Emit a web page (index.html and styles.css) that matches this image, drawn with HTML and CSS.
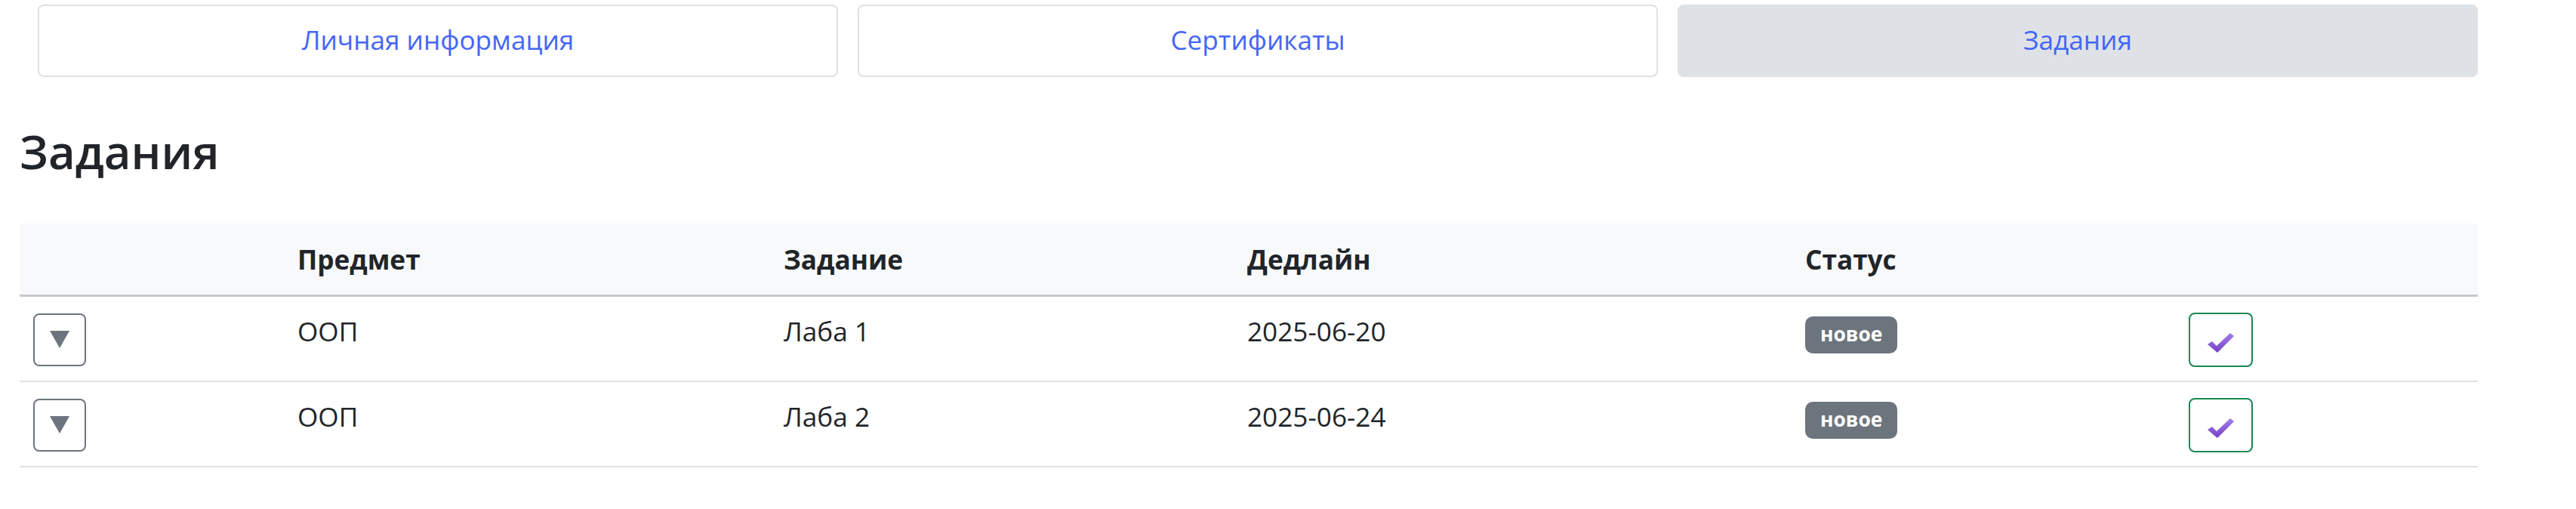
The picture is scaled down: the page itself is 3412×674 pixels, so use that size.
FILE: index.html
```html
<!DOCTYPE html>
<html lang="ru">
<head>
<meta charset="utf-8">
<title>Задания</title>
<link rel="stylesheet" href="styles.css">
</head>
<body>
<div class="page">
  <nav class="tabs">
    <a class="tab" href="#">Личная информация</a>
    <a class="tab" href="#">Сертификаты</a>
    <a class="tab active" href="#">Задания</a>
  </nav>

  <h3 class="title">Задания</h3>

  <table class="tasks">
    <colgroup>
      <col class="c0"><col class="c1"><col class="c2"><col class="c3"><col class="c4"><col class="c5">
    </colgroup>
    <thead>
      <tr>
        <th></th>
        <th>Предмет</th>
        <th>Задание</th>
        <th>Дедлайн</th>
        <th>Статус</th>
        <th></th>
      </tr>
    </thead>
    <tbody>
      <tr>
        <td><button class="toggle" type="button"><svg width="26" height="23" viewBox="0 0 26 23"><polygon points="0,0 26,0 13,23" fill="#6c757d"/></svg></button></td>
        <td>ООП</td>
        <td>Лаба 1</td>
        <td>2025-06-20</td>
        <td><span class="badge">новое</span></td>
        <td><button class="done" type="button"><svg width="35" height="26" viewBox="0 0 35 26"><defs><linearGradient id="g1" x1="0" y1="0" x2="0" y2="1"><stop offset="0" stop-color="#a47de8"/><stop offset="1" stop-color="#7440c8"/></linearGradient></defs><path d="M0,15 L6,11 L12,17 L30,0 L35,4 L13,26 Z" fill="url(#g1)"/></svg></button></td>
      </tr>
      <tr>
        <td><button class="toggle" type="button"><svg width="26" height="23" viewBox="0 0 26 23"><polygon points="0,0 26,0 13,23" fill="#6c757d"/></svg></button></td>
        <td>ООП</td>
        <td>Лаба 2</td>
        <td>2025-06-24</td>
        <td><span class="badge">новое</span></td>
        <td><button class="done" type="button"><svg width="35" height="26" viewBox="0 0 35 26"><defs><linearGradient id="g2" x1="0" y1="0" x2="0" y2="1"><stop offset="0" stop-color="#a47de8"/><stop offset="1" stop-color="#7440c8"/></linearGradient></defs><path d="M0,15 L6,11 L12,17 L30,0 L35,4 L13,26 Z" fill="url(#g2)"/></svg></button></td>
      </tr>
    </tbody>
  </table>
</div>
</body>
</html>
```

FILE: styles.css
```css
* { box-sizing: border-box; }

html, body {
  margin: 0;
  background: #ffffff;
}

body {
  font-family: "Open Sans", "Noto Sans", "Liberation Sans", sans-serif;
  font-size: 35.2px;
  line-height: 1.5;
  color: #212529;
}

.page {
  padding: 6px 130px 0 26px;
}

.tabs {
  display: flex;
  gap: 26px;
  padding-left: 24px;
}

.tab {
  flex: 1 1 0;
  height: 96px;
  display: flex;
  align-items: center;
  justify-content: center;
  border: 2px solid #dee2e6;
  border-radius: 8px;
  background: #ffffff;
  color: #4466f6;
  text-decoration: none;
  padding-bottom: 4px;
}

.tab.active {
  background: #dee2e6;
}

.title {
  margin: 62px 0 58px 0;
  font-size: 61.6px;
  font-weight: 600;
  line-height: 1.2;
  color: #212529;
}

.tasks {
  width: 100%;
  table-layout: fixed;
  border-collapse: collapse;
}

.c0 { width: 350px; }
.c1 { width: 644px; }
.c2 { width: 614px; }
.c3 { width: 739px; }
.c4 { width: 508px; }
.c5 { width: 401px; }

.tasks th {
  text-align: left;
  font-weight: 700;
  background: #f8f9fa;
  padding: 21px 18px 20px 18px;
  border-bottom: 3px solid #c6c9cc;
  line-height: 1.5;
}

.tasks td {
  vertical-align: top;
  padding: 19px 18px 18px 18px;
  border-bottom: 2px solid #dee2e6;
  line-height: 1.5;
}

.toggle {
  width: 70px;
  height: 70px;
  margin-top: 3px;
  padding: 0;
  display: flex;
  align-items: center;
  justify-content: center;
  background: #ffffff;
  border: 2px solid #6c757d;
  border-radius: 8px;
}

.badge {
  display: inline-block;
  margin-top: 6px;
  height: 49px;
  line-height: 47px;
  padding: 0 20px;
  font-size: 26.4px;
  font-weight: 700;
  color: #ffffff;
  background: #6c757d;
  border-radius: 10px;
}

.done {
  width: 85px;
  height: 72px;
  margin-top: 2px;
  margin-left: 0;
  padding: 8px 0 0 0;
  display: flex;
  align-items: center;
  justify-content: center;
  background: #ffffff;
  border: 2px solid #198754;
  border-radius: 8px;
}
```
